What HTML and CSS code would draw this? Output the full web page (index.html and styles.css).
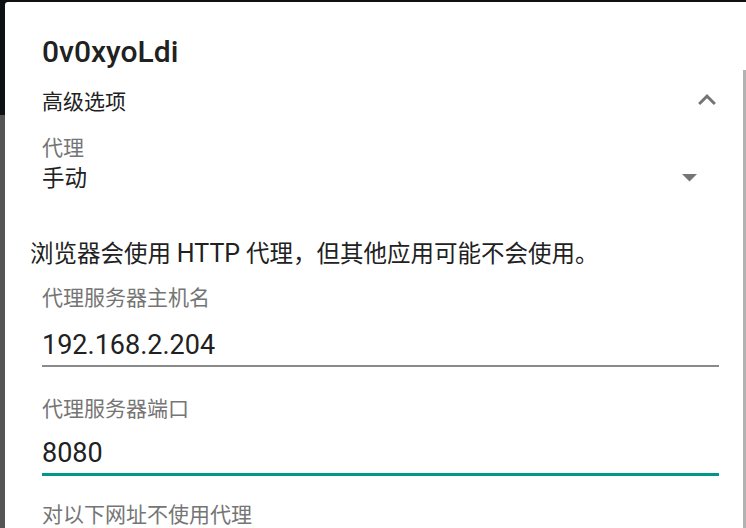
FILE: index.html
```html
<!DOCTYPE html>
<html lang="zh-CN">
<head>
<meta charset="utf-8">
<title>代理设置</title>
<link rel="stylesheet" href="styles.css">
</head>
<body>
<div class="backdrop">
  <div class="bd-dark"></div>
  <div class="bd-gray"></div>
</div>
<div class="dialog">
  <div class="title">0v0xyoLdi</div>
  <div class="sect adv-row">
    <span class="adv-text">高级选项</span>
    <svg class="chevron" viewBox="6 8 12 7.41" width="18" height="11"><path d="M12 8l-6 6 1.41 1.41L12 10.83l4.59 4.58L18 14z"/></svg>
  </div>
  <div class="sect">
    <div class="label label-proxy">代理</div>
    <div class="spinner">
      <span class="spinner-text">手动</span>
      <svg class="drop" viewBox="7 10 10 5" width="15" height="7.5"><path d="M7 10l5 5 5-5z"/></svg>
    </div>
  </div>
  <div class="message">浏览器会使用 <span class="lat">HTTP</span> 代理，但其他应用可能不会使用。</div>
  <div class="sect">
    <div class="label label-host">代理服务器主机名</div>
    <div class="input input-host">192.168.2.204</div>
    <div class="label label-port">代理服务器端口</div>
    <div class="input input-port focused">8080</div>
    <div class="label label-bypass">对以下网址不使用代理</div>
  </div>
  <div class="scrollbar"></div>
</div>
</body>
</html>
```
FILE: styles.css
```css
html, body {
  margin: 0;
  padding: 0;
  height: 100%;
  overflow: hidden;
}
body {
  display: flex;
  padding-top: 2px;
  box-sizing: border-box;
  background: #0e1114;
  font-family: Roboto, "Noto Sans CJK SC", sans-serif;
  color: #212121;
}
.backdrop {
  width: 5px;
  display: flex;
  flex-direction: column;
  flex: none;
}
.bd-dark {
  height: 113px;
  background: #0e1114;
}
.bd-gray {
  flex: 1;
  background: #555555;
}
.dialog {
  flex: 1;
  position: relative;
  background: #ffffff;
  border-top-left-radius: 3px;
  padding: 32px 27px 0 25px;
  overflow: hidden;
}
.title {
  padding-left: 12px;
  font-size: 30px;
  font-weight: 500;
  line-height: 36px;
  color: #212121;
}
.sect {
  padding-left: 12px;
}
.adv-row {
  margin-top: 18px;
  display: flex;
  justify-content: space-between;
  align-items: flex-start;
  height: 28px;
}
.adv-text {
  font-size: 21px;
  line-height: 28px;
}
.chevron {
  margin-top: 6px;
  margin-right: 3px;
  fill: #757575;
}
.label {
  font-size: 21px;
  line-height: 28px;
  color: #757575;
}
.label-proxy {
  margin-top: 18px;
}
.spinner {
  margin-top: 1px;
  display: flex;
  align-items: center;
  justify-content: space-between;
  height: 30px;
}
.spinner-text {
  font-size: 22.5px;
  line-height: 30px;
}
.drop {
  margin-right: 22px;
  fill: #757575;
}
.message {
  margin-top: 46px;
  font-size: 23.5px;
  line-height: 30px;
  color: #212121;
}
.lat {
  font-size: 25px;
  line-height: 1;
}
.label-host {
  margin-top: 15px;
}
.input {
  font-size: 27px;
  line-height: 34px;
  color: #212121;
  padding-bottom: 3px;
}
.input-host {
  margin-top: 15.5px;
  border-bottom: 2px solid #8a8a8a;
}
.label-port {
  margin-top: 28px;
}
.input-port {
  margin-top: 13.7px;
  border-bottom: 3px solid #009688;
}
.label-bypass {
  margin-top: 25px;
}
.scrollbar {
  position: absolute;
  right: 0;
  top: 68px;
  bottom: 0;
  width: 3px;
  background: #b2b2b2;
}
```
